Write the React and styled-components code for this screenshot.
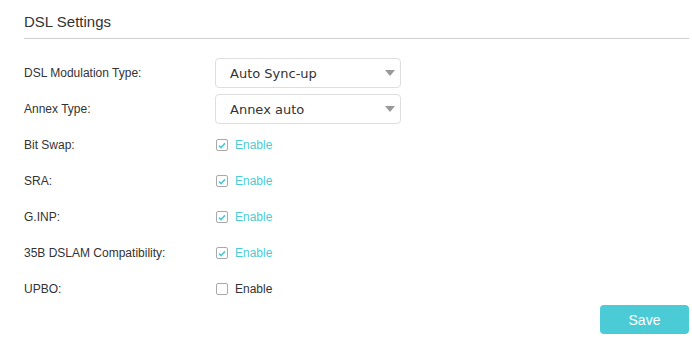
import React, { useState } from 'react';
import styled, { createGlobalStyle } from 'styled-components';

const GlobalStyle = createGlobalStyle`
  html, body {
    margin: 0;
    padding: 0;
    background: #fff;
  }
  body {
    font-family: 'Liberation Sans', Arial, sans-serif;
    color: #333;
  }
`;

const Page = styled.div`
  width: 692px;
  height: 364px;
  padding: 0 3px 0 24px;
  box-sizing: border-box;
`;

const Title = styled.h2`
  margin: 0;
  padding-top: 12px;
  height: 39px;
  box-sizing: border-box;
  font-size: 15px;
  font-weight: normal;
  line-height: 20px;
  color: #333;
  border-bottom: 1px solid #cfcfcf;
`;

const Form = styled.div`
  margin-top: 16px;
  display: flex;
  flex-direction: column;
`;

const Row = styled.div`
  display: flex;
  align-items: center;
  height: 36px;
`;

const Label = styled.div`
  width: 191px;
  font-size: 12px;
  color: #333;
`;

const SelectBox = styled.div`
  position: relative;
  width: 186px;
  height: 30px;
  box-sizing: border-box;
  border: 1px solid #dedede;
  border-radius: 4px;
  display: flex;
  align-items: center;
  padding-left: 14px;
  font-family: 'DejaVu Sans', Verdana, sans-serif;
  font-size: 13px;
  color: #333;
  cursor: pointer;
`;

const Arrow = styled.span`
  position: absolute;
  right: 5px;
  top: 11px;
  width: 0;
  height: 0;
  border-left: 5px solid transparent;
  border-right: 5px solid transparent;
  border-top: 6px solid #999;
`;

const CheckLabel = styled.label`
  display: flex;
  align-items: center;
  gap: 7px;
  margin-left: 1px;
  font-size: 12px;
  color: ${(p) => (p.$on ? '#4acbd6' : '#333')};
  cursor: pointer;
  user-select: none;
`;

const Box = styled.span`
  width: 12px;
  height: 12px;
  box-sizing: border-box;
  border: 1px solid #a9a9a9;
  border-radius: 2px;
  display: flex;
  align-items: center;
  justify-content: center;
`;

const Actions = styled.div`
  display: flex;
  justify-content: flex-end;
  margin-top: -2px;
`;

const SaveButton = styled.button`
  width: 89px;
  height: 29px;
  border: none;
  border-radius: 4px;
  background: #4acbd6;
  color: #fff;
  font-family: 'Liberation Sans', Arial, sans-serif;
  font-size: 14px;
  cursor: pointer;
`;

const Select = ({ value }) => (
  <SelectBox>
    {value}
    <Arrow />
  </SelectBox>
);

const Check = ({ checked, onToggle }) => (
  <CheckLabel $on={checked} onClick={onToggle}>
    <Box>
      {checked && (
        <svg width="8" height="7" viewBox="0 0 8 7">
          <path d="M1 3.6 L3.1 5.6 L7 1.2" fill="none" stroke="#4acbd6" strokeWidth="1.6" />
        </svg>
      )}
    </Box>
    Enable
  </CheckLabel>
);

const App = () => {
  const [opts, setOpts] = useState({
    bitSwap: true,
    sra: true,
    ginp: true,
    dslam: true,
    upbo: false,
  });

  const toggle = (key) => setOpts((prev) => ({ ...prev, [key]: !prev[key] }));

  const checks = [
    { key: 'bitSwap', label: 'Bit Swap:' },
    { key: 'sra', label: 'SRA:' },
    { key: 'ginp', label: 'G.INP:' },
    { key: 'dslam', label: '35B DSLAM Compatibility:' },
    { key: 'upbo', label: 'UPBO:' },
  ];

  return (
    <Page>
      <GlobalStyle />
      <Title>DSL Settings</Title>
      <Form>
        <Row>
          <Label>DSL Modulation Type:</Label>
          <Select value="Auto Sync-up" />
        </Row>
        <Row>
          <Label>Annex Type:</Label>
          <Select value="Annex auto" />
        </Row>
        {checks.map((c) => (
          <Row key={c.key}>
            <Label>{c.label}</Label>
            <Check checked={opts[c.key]} onToggle={() => toggle(c.key)} />
          </Row>
        ))}
      </Form>
      <Actions>
        <SaveButton>Save</SaveButton>
      </Actions>
    </Page>
  );
};

export default App;
